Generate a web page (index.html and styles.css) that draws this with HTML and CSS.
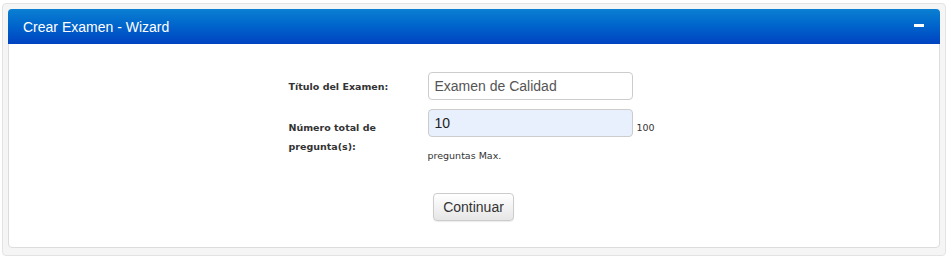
FILE: index.html
```html
<!DOCTYPE html>
<html lang="es">
<head>
<meta charset="utf-8">
<title>Crear Examen - Wizard</title>
<link rel="stylesheet" href="styles.css">
</head>
<body>
<div class="well">
  <div class="panel">
    <div class="panel-heading">
      <span class="panel-title">Crear Examen - Wizard</span>
      <span class="collapse-btn"></span>
    </div>
    <div class="panel-body">
      <form class="wizard-form">
        <div class="form-row row-titulo">
          <label class="form-label">Título del Examen:</label>
          <div class="form-field">
            <input class="form-input" type="text" value="Examen de Calidad">
          </div>
        </div>
        <div class="form-row row-numero">
          <label class="form-label">Número total de pregunta(s):</label>
          <div class="form-field">
            <div class="field-line">
              <input class="form-input filled" type="text" value="10">
              <span class="hint">100</span>
            </div>
            <div class="hint hint-below">preguntas Max.</div>
          </div>
        </div>
        <div class="form-actions">
          <button class="btn" type="button">Continuar</button>
        </div>
      </form>
    </div>
  </div>
</div>
</body>
</html>
```

FILE: styles.css
```css
body { margin:0; padding:0; background:#fff; font-family:"Liberation Sans", Arial, sans-serif; color:#333; }
.well { margin:3px 2px 0 2px; padding:5px 5px 6px 5px; background:#f5f5f5; border:1px solid #e3e3e3; border-radius:4px; height:240px; }
.panel { background:#fff; border:1px solid #dcdcdc; border-radius:4px; height:239px; box-sizing:border-box; }
.panel-heading { height:35px; margin:-1px -1px 0 -1px; padding:0 15px 0 15px; display:flex; align-items:center; justify-content:space-between; background:linear-gradient(to bottom, #0b80d2 0%, #0066cc 45%, #0043c1 100%); border-radius:4px 4px 0 0; color:#fff; }
.panel-title { font-size:14px; padding-left:0; margin-top:1px; }
.collapse-btn { width:10px; height:3px; background:#fff; margin-right:1px; align-self:flex-start; margin-top:15px; }
.panel-body { padding-top:28px; }
.wizard-form { width:372px; margin:0 auto; padding-left:1px; }
.form-row { display:flex; }
.row-titulo { align-items:center; }
.row-numero { margin-top:9px; }
.form-label { width:139px; flex:none; font-family:"DejaVu Sans", Verdana, sans-serif; font-weight:bold; font-size:9.5px; line-height:19px; color:#333; }
.row-numero .form-label { padding-top:9px; width:110px; margin-right:29px; }
.form-input { width:205px; height:28px; box-sizing:border-box; padding:0 6px; border:1px solid #ccc; border-radius:4px; font-family:"Liberation Sans", Arial, sans-serif; font-size:14px; color:#555; background:#fff; outline:none; margin:0; }
.form-input.filled { background:#e8f0fe; color:#222; }
.field-line { display:flex; align-items:flex-end; }
.hint { font-family:"DejaVu Sans", Verdana, sans-serif; font-size:9.5px; color:#333; }
.field-line .hint { margin-left:4px; margin-bottom:4px; }
.hint-below { margin-top:13px; }
.form-actions { display:flex; justify-content:center; margin-top:32px; padding-right:2px; }
.btn { width:81px; height:28px; border:1px solid #ccc; border-radius:4px; background:linear-gradient(to bottom, #ffffff 0%, #e6e6e6 100%); font-family:"Liberation Sans", Arial, sans-serif; font-size:14px; color:#333; box-shadow:0 1px 1px rgba(0,0,0,0.08); padding:0; }
```
